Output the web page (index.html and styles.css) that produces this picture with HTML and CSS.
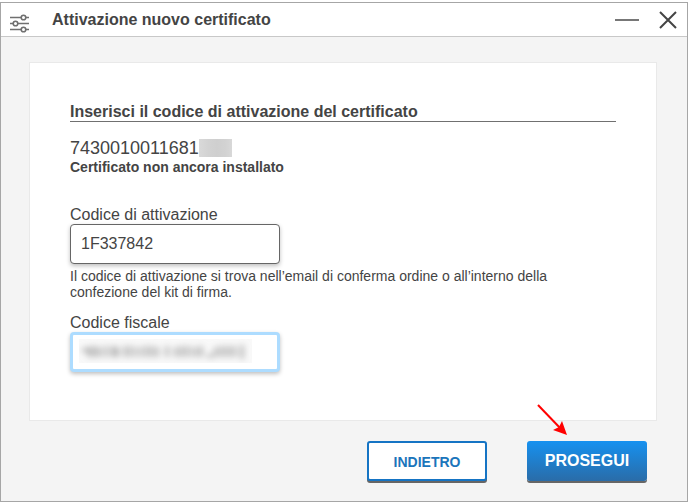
FILE: index.html
```html
<!DOCTYPE html>
<html lang="it">
  <head>
    <meta charset="UTF-8">
    <title>Attivazione nuovo certificato</title>
    <link rel="stylesheet" href="styles.css">
  </head>

  <body>
    <div class="window">
      <header class="titlebar">
        <svg class="settings" viewBox="0 0 20 20" width="20" height="20">
          <path d="M1 3.5h11M17 3.5h3M1 9.5h3M9 9.5h11M1 15.5h11M17 15.5h3" />
          <circle cx="14.5" cy="3.5" r="2.3" />
          <circle cx="6.5" cy="9.5" r="2.3" />
          <circle cx="14.5" cy="15.5" r="2.3" />
        </svg>
        <h1>Attivazione nuovo certificato</h1>
        <button class="winbtn" type="button" aria-label="Riduci">
          <svg viewBox="0 0 24 20" width="24" height="20"><path class="min" d="M0 10h24" /></svg>
        </button>
        <button class="winbtn" type="button" aria-label="Chiudi">
          <svg viewBox="0 0 18 18" width="18" height="18"><path class="close" d="M1 1l16 16M17 1L1 17" /></svg>
        </button>
      </header>

      <form>
        <main class="card">
          <h2>Inserisci il codice di attivazione del certificato</h2>
          <div class="number">7430010011681<span class="mask"></span></div>
          <div class="status">Certificato non ancora installato</div>

          <div class="field">
            <label for="codice">Codice di attivazione</label>
            <input type="text" id="codice" value="1F337842">
            <p>Il codice di attivazione si trova nell’email di conferma ordine o all’interno della confezione del kit di firma.</p>
          </div>

          <div class="field">
            <label for="fiscale">Codice fiscale</label>
            <div class="masked">
              <input class="active" type="text" id="fiscale">
              <!-- hides the personal data -->
              <svg class="mask-long" viewBox="0 0 173 24" width="173" height="24">
                <defs>
                  <filter id="soft" x="-10%" y="-50%" width="120%" height="200%">
                    <feGaussianBlur stdDeviation="3" />
                  </filter>
                </defs>
                <rect width="173" height="24" fill="#f9f9f9" />
                <path filter="url(#soft)" d="M3 11h8M10 8v10M15 7v11M20 8v10M27 7v11M34 7v11M38 8v10M46 7v11M52 7v11M59 8v10M66 7v11M72 7v11M78 8v10M88 7v11M97 8v10M103 7v11M109 7v11M116 8v10M122 7v11M128 17h6M137 8v10M143 7v11M149 7v11M155 7v11M163 6v14" />
              </svg>
            </div>
          </div>
        </main>

        <footer class="actions">
          <button class="back" type="button">INDIETRO</button>
          <button class="next" type="submit">PROSEGUI
            <svg class="arrow" viewBox="0 0 32 32" width="32" height="32">
              <path class="shaft" d="M1 1L25 26" />
              <path class="tip" d="M30 31L16 26L22 23L25 17Z" />
            </svg>
          </button>
        </footer>
      </form>
    </div>
  </body>
</html>
```

FILE: styles.css
```css
* {
  box-sizing: border-box;
}

body {
  margin: 2px 0 0;
  color: #444;
  font-family: "Liberation Sans", Arial, sans-serif;
  font-size: 16px;
}

h1,
h2,
p {
  margin: 0;
}

.window {
  background-color: #f4f4f4;
  border: 1px solid #a6a6a6;
}

.titlebar {
  display: flex;
  align-items: center;
  height: 34px;
  padding: 0 10px 0 8px;
  background-color: white;
  border-bottom: 1px solid #c8c8c8;
}

.settings {
  margin: 8px 23px 0 0;
  fill: none;
  stroke: #707070;
  stroke-width: 1.6;
}

h1 {
  flex: 1;
  font-size: 16px;
  line-height: 20px;
}

.winbtn {
  display: flex;
  align-items: center;
  margin-left: 20px;
  padding: 0;
  background: none;
  border: none;
}

.min {
  stroke: #777;
  stroke-width: 2;
}

.close {
  stroke: #444;
  stroke-width: 2;
}

.card {
  margin: 25px 30px 20px 28px;
  padding: 40px 40px 48px;
  background-color: white;
  border: 1px solid #e9e9e9;
}

h2 {
  border-bottom: 1px solid #707070;
  font-size: 16px;
  line-height: 18px;
}

.number {
  display: flex;
  align-items: center;
  margin-top: 16px;
  font-size: 18px;
  line-height: 20px;
}

.mask {
  width: 33px;
  height: 18px;
  background: linear-gradient(90deg, #d9d9d9, #d2d2d2 30%, #cfcfcf 55%, #d2d2d2 80%, #d8d8d8);
}

.status {
  margin-bottom: 28px;
  font-size: 14px;
  font-weight: bold;
  line-height: 18px;
}

.field {
  margin-top: 14px;
}

label {
  display: block;
  padding-top: 2px;
  line-height: 18px;
}

.field + .field {
  margin-top: 12px;
}

input {
  display: block;
  width: 210px;
  height: 40px;
  padding: 0 10px;
  color: #444;
  background-color: white;
  border: 1px solid #666;
  border-radius: 4px;
  box-shadow: 0 2px 4px rgba(0, 0, 0, 0.25);
  font-family: inherit;
  font-size: 16px;
}

.active {
  border: 3px solid #addcff;
}

.field p {
  max-width: 490px;
  margin-top: 4px;
  font-size: 14px;
  line-height: 16px;
}

.masked {
  position: relative;
}

.mask-long {
  position: absolute;
  top: 7px;
  left: 9px;
}

.mask-long path {
  stroke: #a4a4a4;
  stroke-width: 3;
}

.actions {
  display: flex;
  justify-content: flex-end;
  gap: 40px;
  padding: 0 40px 20px 0;
}

.actions button {
  width: 120px;
  height: 40px;
  padding: 0;
  border-radius: 3px;
  box-shadow: 0 2px 0 #666;
  font-family: inherit;
  font-weight: bold;
}

.actions .back {
  padding-top: 2px;
  color: #1b75bb;
  background-color: white;
  border: 2px solid #1574c4;
  font-size: 14px;
}

.actions .next {
  position: relative;
  color: white;
  background: linear-gradient(#1691f0, #2a6ca8);
  border: none;
  font-size: 16px;
}

/* red pointer over the main button */
.arrow {
  position: absolute;
  top: -37px;
  left: 10px;
}

.shaft {
  stroke: red;
  stroke-width: 2;
}

.tip {
  fill: red;
}
```
